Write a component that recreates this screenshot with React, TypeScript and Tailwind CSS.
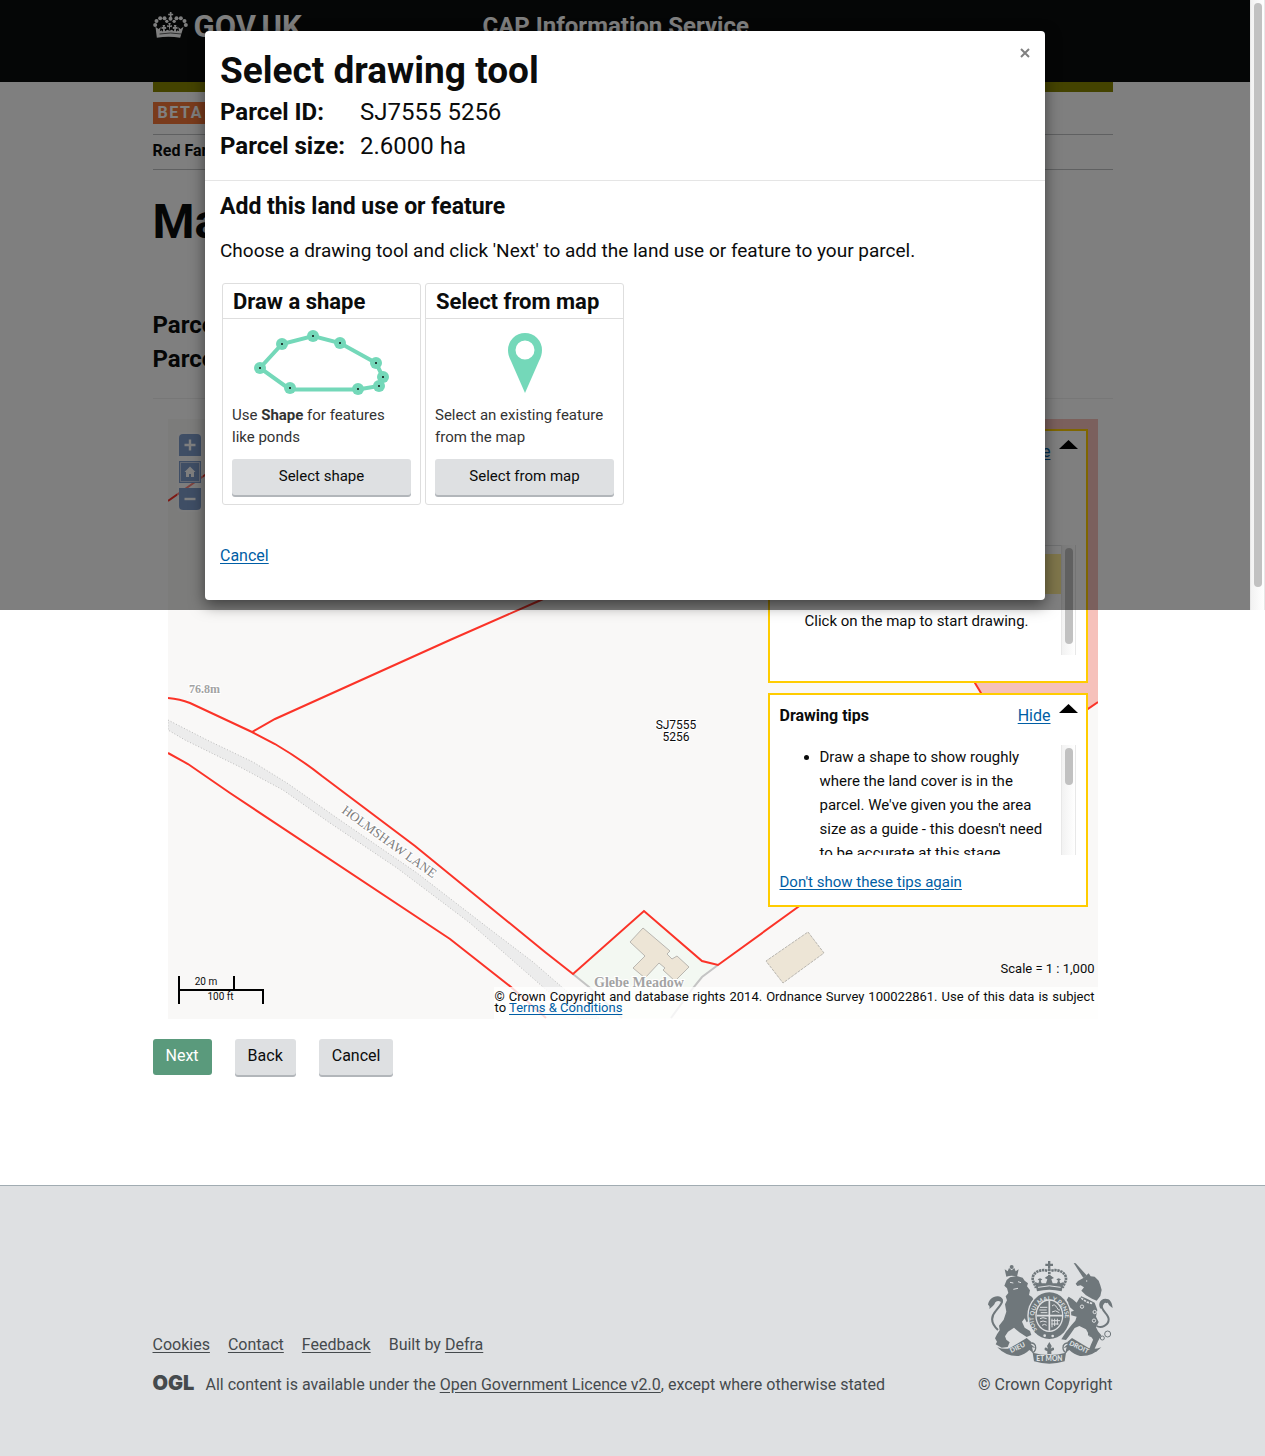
import type { ReactNode } from 'react';

function HeaderCrown() {
  return (
    <svg viewBox="39 38 104 78" className="h-[26px] w-[35px] fill-white" aria-hidden="true">
      <path d="M89 38h5v5h5v5h-5v5h-5v-5h-5v-5h5z" />
      <circle cx="91" cy="58" r="6" />
      <circle cx="80" cy="66" r="5" />
      <circle cx="102" cy="66" r="5" />
      <circle cx="73" cy="57" r="6" />
      <circle cx="109" cy="57" r="6" />
      <circle cx="60" cy="57" r="6" />
      <circle cx="122" cy="57" r="6" />
      <circle cx="49" cy="65" r="6" />
      <circle cx="133" cy="65" r="6" />
      <circle cx="45" cy="77" r="6" />
      <circle cx="137" cy="77" r="6" />
      <path d="M46 82l9 7 7-6-3 13 5-3 4 4 1-9-5 1v-7l5 1-2-6h8l-2 6 5-1v7l-5-1 2 8 6-5 7 3-2-12-5 2v-7l6 2-3-8h8l-3 8 6-2v7l-5-2-2 12 7-3 6 5 2-8-5 1v-7l5 1-2-6h8l-2 6 5-1v7l-5-1 1 9 4-4 5 3-3-13 7 6 9-7-10 33q-35 -6-70 0z" />
      <path d="M58 104q33-6 66 0" className="fill-none stroke-[#0b0c0c] stroke-2" />
    </svg>
  );
}

function RoyalArms() {
  return (
    <svg viewBox="84 33 375 309" className="h-[103px] w-[125px]" fill="#6f777b" stroke="none" aria-hidden="true">
      {/* St Edward's crown */}
      <path d="M264 33h7v8h8v7h-8v8h-7v-8h-8v-7h8z" />
      <path d="M268 56v48M262 62c-22-6-44 6-44 24 0 10 8 18 10 28M274 62c22-6 44 6 44 24 0 10-8 18-10 28" fill="none" stroke="#6f777b" strokeWidth="8" strokeDasharray="7 2" />
      <path d="M225 96l10 4 3-8-5-4 7-3 7 3-5 4 3 8 13 0 4-12-8-4 8-6h12l8 6-8 4 4 12h13l3-8-5-4 7-3 7 3-5 4 3 8 10-4-6 28q-37-10-74 0z" />
      <path d="M234 112q34-9 68 0" fill="none" stroke="#dee0e2" strokeWidth="3" />
      {/* Lion */}
      <path d="M134 58l9 6 4-10 8 7 8-7 4 10 9-6-5 22q-16-5-32 0z" />
      <circle cx="155" cy="51" r="6" />
      <path d="M140 90l10-8 20-4 18 5 6 9 10 8-3 9 9 12-3 14 9 6 6 10-8 12-8 14 8 18-4 14-10 8-6-12-8 10 8 18 16 10 4 12-14 6-22-14-16-14-18 12-9 14 4 10 10 8-6 14-18 2-18-10 4-8-6-10 6-12 8-12-2-14 14-18 8-24-4-22 6-12-4-12 8-10-4-14-8-8z" />
      <path d="M114 240c-22-20-22-40-6-58 18-22 26-32 8-38-10 0-18 8-22 18" fill="none" stroke="#6f777b" strokeWidth="6" />
      <path d="M84 164c2-14 14-26 30-25 12 1 18 10 12 20-6-8-14-8-20-2-4 10-10 14-18 20 2-8 0-10-4-13z" />
      <path d="M150 97l10 2M174 95l9 3M160 118l14-3" stroke="#dee0e2" strokeWidth="3" />
      {/* Unicorn */}
      <path d="M341 39L347 40L380 76L370 84Z" />
      <path d="M370 84L386 70L392 79L404 80L416 92L421 106L425 120L421 138L410 152L396 146L378 136L364 122L372 112L362 106L352 108L347 101L354 93Z" />
      <path d="M362 138L384 148L404 158L412 180L408 200L416 216L408 232L414 244L424 256L414 274L404 296L410 306L386 302L392 286L400 268L388 256L378 238L358 228L344 234L330 254L318 270L304 268L318 246L334 226L346 212L350 200L334 196L322 208L314 202L324 188L342 182L330 172L318 176L314 166L326 160L320 150L326 140L338 148L350 158Z" />
      <path d="M357 137l9 9 14 10 18 5" fill="none" stroke="#dee0e2" strokeWidth="5" strokeDasharray="7 3" />
      <circle cx="380" cy="93" r="2" fill="#dee0e2" />
      <path d="M410 228c14 8 36-2 36-20 0-16-26-28-20-44 2-10 10-12 16-6" fill="none" stroke="#6f777b" strokeWidth="6" />
      <path d="M424 178c-12-10-6-32 12-32 14 0 20 10 22 28-6-4-10-6-14-14-4-6-12-4-20 18z" />
      <g fill="none" stroke="#6f777b" strokeWidth="3">
        <circle cx="392" cy="252" r="7" />
        <circle cx="406" cy="265" r="7" />
        <circle cx="427" cy="264" r="6" />
        <circle cx="443" cy="252" r="9" />
      </g>
      <g fill="none" stroke="#dee0e2" strokeWidth="3">
        <circle cx="366" cy="170" r="5" />
        <circle cx="404" cy="186" r="5" />
        <circle cx="402" cy="212" r="5" />
      </g>
      {/* Garter and shield */}
      <ellipse cx="268" cy="197" rx="66" ry="73" fill="#dee0e2" />
      <ellipse cx="268" cy="197" rx="62" ry="70" />
      <ellipse cx="268" cy="197" rx="42" ry="49" fill="#dee0e2" />
      <ellipse cx="268" cy="197" rx="38" ry="45" />
      <path id="garter" d="M232 240a47 54 0 1 1 72 0" fill="none" />
      <text fill="#dee0e2" fontSize="18" fontWeight="700" fontFamily="Lato, sans-serif">
        <textPath href="#garter">SOIT QUI MAL Y PENSE</textPath>
      </text>
      <path d="M268 152v90M230 197h76" stroke="#dee0e2" strokeWidth="5" />
      <path d="M240 172h22M238 180h22M242 188h20M276 168q8-8 14 4t10 8M276 186q10-8 22 2M240 206q8-6 20 0M240 216q8-6 20 0M246 226q8-6 14 0M276 206v26M284 206v22M292 206v18M274 212h26M274 222h22" fill="none" stroke="#dee0e2" strokeWidth="3" />
      <circle cx="254" cy="257" r="4" fill="#dee0e2" />
      <circle cx="278" cy="258" r="4" fill="#dee0e2" />
      {/* Motto ribbon */}
      <path d="M112 292q22 8 38 2l50-30 14 12-2 6 14 12-10-2q4 12 2 18-4-8-10-10-14 14-32 18-38 2-64-26zM424 292q-22 8-38 2l-50-30-14 12 2 6-14 12 10-2q-4 12-2 18 4-8 10-10 14 14 32 18 38 2 64-26z" />
      <path d="M206 282q12-8 20 4 4 16-8 22M330 282q-12-8-20 4-4 16 8 22" fill="none" stroke="#6f777b" strokeWidth="4" />
      <path d="M218 308q50 14 100 0l-4 26q-46 14-92 0z" />
      <g fill="#dee0e2" fontFamily="Lato, sans-serif" fontWeight="900" fontSize="20">
        <text x="229" y="334">ET MON</text>
        <text x="154" y="309" transform="rotate(-26 154 309)">DIEU</text>
        <text x="326" y="284" transform="rotate(26 326 284)">DROIT</text>
      </g>
      <path d="M268 276l7 12-3 8q12-8 10 4l-8 4v8h-12v-8l-8-4q-2-12 10-4l-3-8z" />
    </svg>
  );
}

function MapDrawing() {
  return (
    <svg
      viewBox="168 419 930 600"
      preserveAspectRatio="xMidYMid slice"
      className="absolute inset-0 h-full w-full"
      role="img"
      aria-label="Map of parcel SJ7555 5256"
    >
      <rect x="168" y="419" width="930" height="600" fill="#f9f8f7" />
      <path d="M860 419H1098V702L1022 754L981 693L975 683Z" fill="#f6c1bb" />
      <path
        d="M168 720L207 740L253 762L287 783L337 818L417 873L487 927L533 962L563 988L600 1019H580L543 987L470 923L397 868L330 823L283 790L240 767L185 740L168 730Z"
        fill="#ececec"
        stroke="#bcbcbc"
        strokeDasharray="1 2"
      />
      <path d="M573 974L644 912L702 961L718 965L702 977L693 988L671 1018H620L589 987Z" fill="#f3f8f2" />
      <path d="M718 965L702 977L693 988L671 1018M573 974L589 987L622 1018" fill="none" stroke="#c4c4c4" strokeWidth="2" />
      <path
        d="M643 928L670 951L667 954L672 959L677 956L689 967L675 981L663 970L665 968L659 963L645 978L633 968L645 956L630 942Z"
        fill="#ede5d6"
        stroke="#b9b6b0"
      />
      <path d="M808 932L824 953L783 983L766 961Z" fill="#ede5d6" stroke="#b9b6b0" strokeDasharray="3 1" />
      <g stroke="#ffffff" strokeWidth="2" paintOrder="stroke" fontFamily="'Liberation Serif', serif">
        <text x="189" y="693" fontSize="12" fontWeight="700" fill="#a3a3a3">76.8m</text>
        <text x="341" y="812" fontSize="13" fill="#7c7c7c" transform="rotate(36 341 812)">HOLMSHAW LANE</text>
        <text x="594" y="987" fontSize="14" fontWeight="700" fill="#a3a3a3">Glebe Meadow</text>
      </g>
      <g fill="none" stroke="#fb3328" strokeWidth="2">
        <path d="M168 698Q180 699 190 703L252 732L275 744Q302 760 322 776L415 846L545 952L573 974L644 911L702 961L718 965L798 907L1098 702" />
        <path d="M252 732L275 719L450 640L541 600L760 500" />
        <path d="M168 501L205 475L290 419" />
        <path d="M168 753L188 764L230 793L450 939L511 987L546 1018" />
        <path d="M860 419L975 683L981 693L1022 754" />
      </g>
      <g fontFamily="Roboto, sans-serif" fontSize="12" textAnchor="middle" fill="#0b0c0c" stroke="#ffffff" strokeWidth="2" paintOrder="stroke">
        <text x="676" y="729">SJ7555</text>
        <text x="676" y="741">5256</text>
      </g>
    </svg>
  );
}

function MapButton({ label, className, children }: { label: string; className: string; children: ReactNode }) {
  return (
    <button
      type="button"
      aria-label={label}
      className={`flex h-[22px] w-[22px] items-center justify-center bg-[#7f9dcb] ${className}`}
    >
      <svg viewBox="0 0 12 12" className="h-3 w-3 fill-white" aria-hidden="true">
        {children}
      </svg>
    </button>
  );
}

function ScrollTrack({ thumb }: { thumb: string }) {
  return (
    <div className="w-[15px] shrink-0 border-x border-[#e8e8e8] bg-linear-to-r from-[#f2f2f2] to-white pt-[3px]" aria-hidden="true">
      <div className={`ml-[3px] w-2 rounded-full bg-[#c1c1c1] ${thumb}`} />
    </div>
  );
}

function Panel({ title, gap, children }: { title: string; gap: string; children: ReactNode }) {
  return (
    <section className="border-2 border-[#ffcc00] bg-white pt-[9px] pl-[10px]">
      <div className={`flex pr-2 ${gap}`}>
        <h2 className="flex-1 text-base leading-6 font-bold">{title}</h2>
        <a href="#hide" className="text-base leading-6 text-[#005ea5] underline underline-offset-2">Hide</a>
        <svg viewBox="0 0 19 9" className="ml-2 h-[9px] w-[19px] fill-black" aria-hidden="true">
          <path d="M0 9L9.5 0L19 9Z" />
        </svg>
      </div>
      {children}
    </section>
  );
}

function ParcelMap() {
  return (
    <div className="relative h-[600px] overflow-hidden">
      <MapDrawing />
      <div className="absolute top-[13px] left-[9px] flex flex-col gap-[5px] rounded bg-white/40 p-[2px]">
        <MapButton label="Zoom in" className="rounded-t">
          <path d="M4.8 0.5h2.4v4.3h4.3v2.4h-4.3v4.3h-2.4v-4.3h-4.3v-2.4h4.3z" />
        </MapButton>
        <MapButton label="Home" className="border border-[#7f9dcb] inset-ring inset-ring-[#c4d1e6]">
          <path d="M6 0.5L11.5 6H10V11H7V8H5V11H2V6H0.5Z" />
        </MapButton>
        <MapButton label="Zoom out" className="rounded-b">
          <path d="M0.5 4.8h11v2.4h-11z" />
        </MapButton>
      </div>

      <div className="absolute top-[10px] right-[10px] flex w-[320px] flex-col gap-[10px]">
        <Panel title="Drawing tool" gap="mb-[81px]">
          <div className="mr-[10px] mb-[26px] flex h-[110px]">
            <div className="flex-1 overflow-hidden border-t border-[#dee0e2] pt-2">
              <div className="h-10 bg-[#ffec96]" />
              <p className="mt-[15px] pl-[25px] text-[15px] leading-6">Click on the map to start drawing.</p>
            </div>
            <ScrollTrack thumb="h-24" />
          </div>
        </Panel>
        <Panel title="Drawing tips" gap="mb-[17px]">
          <div className="mr-[10px] flex h-[110px]">
            <ul className="flex-1 list-disc overflow-hidden pr-3 pl-10 text-[15px] leading-6">
              <li>
                Draw a shape to show roughly where the land cover is in the parcel. We've given you the area size as a
                guide - this doesn't need to be accurate at this stage.
              </li>
            </ul>
            <ScrollTrack thumb="h-[37px]" />
          </div>
          <a href="#tips" className="mt-[15px] mb-[11px] inline-block text-[15px] leading-6 text-[#005ea5] underline underline-offset-2">
            Don't show these tips again
          </a>
        </Panel>
      </div>

      <div className="absolute bottom-[15px] left-[10px] text-center text-[10px] leading-3">
        <div className="h-[15px] w-[57px] border-x-2 border-b-2 border-black">20 m</div>
        <div className="-mt-[2px] h-[15px] w-[86px] border-x-2 border-t-2 border-black">100 ft</div>
      </div>
      <div className="absolute right-[3px] bottom-[42px] text-[13px] leading-4">Scale = 1 : 1,000</div>
      <p className="absolute right-0 bottom-0 h-8 w-[604px] bg-white/80 pt-1 pr-[3px] pl-px text-justify text-[13px] leading-[11px]">
        © Crown Copyright and database rights 2014. Ordnance Survey 100022861. Use of this data is subject to{' '}
        <a href="#terms" className="text-[#005ea5] underline underline-offset-2">Terms &amp; Conditions</a>
      </p>
    </div>
  );
}

function ParcelDetails() {
  return (
    <dl className="grid grid-cols-[140px_1fr] text-2xl leading-[34px]">
      <dt className="font-bold">Parcel ID:</dt>
      <dd>SJ7555 5256</dd>
      <dt className="font-bold">Parcel size:</dt>
      <dd>2.6000 ha</dd>
    </dl>
  );
}

function ToolCard({ title, button, art, children }: { title: string; button: string; art: ReactNode; children: ReactNode }) {
  return (
    <section className="w-[199px] rounded-[3px] border border-[#dedede]">
      <h3 className="border-b border-[#dedede] px-[10px] pt-[2px] text-[22px] leading-8 font-bold">{title}</h3>
      <div className="px-[9px] pt-[11px] pb-[9px]">
        <div className="flex h-[66px] items-center justify-center">{art}</div>
        <p className="mt-2 min-h-11 text-[15px] leading-[22px] text-[#333333]">{children}</p>
        <button type="button" className="mt-[11px] h-9 w-full rounded-[3px] bg-[#dee0e2] pb-[2px] text-[15px] shadow-[0_2px_0_#b2b6ba]">
          {button}
        </button>
      </div>
    </section>
  );
}

const shapePoints = [
  [6, 38], [28, 14], [59, 6], [86, 13], [122, 33], [129, 47], [125, 56], [104, 59], [36, 58],
];

function DrawingToolDialog() {
  return (
    <div className="absolute inset-x-0 top-0 flex h-[610px]">
      <div className="flex-1 bg-black/50 pt-[31px]">
        <div
          role="dialog"
          aria-labelledby="dialog-title"
          className="relative mx-auto w-[840px] max-w-full rounded bg-white shadow-[0_5px_15px_rgba(0,0,0,0.5)]"
        >
          <button type="button" aria-label="Close" className="absolute top-4 right-[15px] flex h-[11px] w-[11px] items-center justify-center">
            <svg viewBox="0 0 10 10" className="h-[10px] w-[10px] stroke-[#808080] stroke-2" aria-hidden="true">
              <path d="M1 1L9 9M9 1L1 9" />
            </svg>
          </button>
          <header className="border-b border-[#e5e5e5] px-[15px] pt-5 pb-[17px]">
            <h1 id="dialog-title" className="mb-1 text-[37px] leading-10 font-bold">Select drawing tool</h1>
            <ParcelDetails />
          </header>
          <div className="px-[15px] pt-[11px] pb-8">
            <h2 className="text-[23px] leading-[30px] font-bold">Add this land use or feature</h2>
            <p className="mt-[15px] text-[19px] leading-7">
              Choose a drawing tool and click 'Next' to add the land use or feature to your parcel.
            </p>
            <div className="mt-[18px] ml-[2px] flex gap-1">
              <ToolCard
                title="Draw a shape"
                button="Select shape"
                art={
                  <svg viewBox="0 0 136 66" className="h-[66px] w-[136px]" aria-hidden="true">
                    <path d="M6 38L28 14L59 6L86 13L122 33L129 47L125 56L104 59.500H36Z" fill="none" stroke="#74d8b9" strokeWidth="4" />
                    {shapePoints.map(([x, y]) => (
                      <g key={`${x}-${y}`}>
                        <circle cx={x} cy={y} r="6" fill="#74d8b9" />
                        <circle cx={x} cy={y} r="1" fill="#0b0c0c" />
                      </g>
                    ))}
                  </svg>
                }
              >
                Use <b>Shape</b> for features like ponds
              </ToolCard>
              <ToolCard
                title="Select from map"
                button="Select from map"
                art={
                  <svg viewBox="0 0 34 60" className="h-[60px] w-[34px]" aria-hidden="true">
                    <path
                      d="M17 0a17 17 0 0 1 17 17c0 4-1 7-3 11L17 60L3 28C1 24 0 21 0 17A17 17 0 0 1 17 0zM17 7.500a9.500 9.500 0 1 0 0 19a9.500 9.500 0 1 0 0-19z"
                      fill="#74d8b9"
                      fillRule="evenodd"
                    />
                  </svg>
                }
              >
                Select an existing feature from the map
              </ToolCard>
            </div>
            <a href="#cancel" className="mt-[39px] inline-block text-base leading-6 text-[#005ea5] underline underline-offset-2">Cancel</a>
          </div>
        </div>
      </div>
      <ScrollTrack thumb="h-[584px]" />
    </div>
  );
}

export default function App() {
  return (
    <div className="relative bg-white font-[Roboto,sans-serif] text-[#0b0c0c]">
      <header className="h-[82px] bg-[#0b0c0c] text-white">
        <div className="mx-auto flex max-w-[960px] pt-3">
          <a href="#home" className="flex w-[330px] gap-[6px] text-[31px] leading-[30px] font-bold">
            <HeaderCrown />
            GOV.UK
          </a>
          <a href="#service" className="text-2xl leading-7 font-bold">CAP Information Service</a>
        </div>
      </header>

      <main className="mx-auto max-w-[960px]">
        <div className="h-[10px] bg-[#898700]" />
        <strong className="mt-[10px] block h-[22px] w-fit bg-[#f47738] px-[5px] text-base leading-[22px] font-bold tracking-widest text-white">
          BETA
        </strong>
        <div className="mt-[10px] h-9 border-y border-[#bfc1c3] text-base leading-8 font-bold">Red Farm</div>
        <h1 className="mt-7 text-5xl leading-12 font-bold">Map land use</h1>
        <div className="mt-[62px]">
          <ParcelDetails />
        </div>
        <hr className="mt-[22px] mb-5 border-[#eeeeee]" />
        <div className="px-[15px]">
          <ParcelMap />
        </div>
        <div className="mt-5 flex gap-[23px] text-base">
          <button type="button" className="h-9 rounded-[3px] bg-[#5a9a7c] px-[13px] pb-[2px] text-white">Next</button>
          <button type="button" className="h-9 rounded-[3px] bg-[#dee0e2] px-[13px] pb-[2px] shadow-[0_2px_0_#b2b6ba]">Back</button>
          <button type="button" className="h-9 rounded-[3px] bg-[#dee0e2] px-[13px] pb-[2px] shadow-[0_2px_0_#b2b6ba]">Cancel</button>
        </div>
      </main>

      <footer className="mt-[110px] border-t border-[#a1acb2] bg-[#dee0e2] pt-[75px] pb-[61px] text-[#454a4d]">
        <div className="mx-auto flex max-w-[960px] items-end justify-between text-base leading-5">
          <div>
            <nav className="mb-5 flex gap-[18px]">
              <a href="#cookies" className="underline underline-offset-2">Cookies</a>
              <a href="#contact" className="underline underline-offset-2">Contact</a>
              <a href="#feedback" className="underline underline-offset-2">Feedback</a>
              <span>
                Built by <a href="#defra" className="underline underline-offset-2">Defra</a>
              </span>
            </nav>
            <div className="flex">
              <span className="w-[53px] font-[Inter,sans-serif] text-xl leading-4 font-black">OGL</span>
              <p>
                All content is available under the{' '}
                <a href="#ogl" className="underline underline-offset-2">Open Government Licence v2.0</a>, except where
                otherwise stated
              </p>
            </div>
          </div>
          <div className="flex flex-col items-end">
            <RoyalArms />
            <span className="mt-[11px]">© Crown Copyright</span>
          </div>
        </div>
      </footer>

      <DrawingToolDialog />
    </div>
  );
}
